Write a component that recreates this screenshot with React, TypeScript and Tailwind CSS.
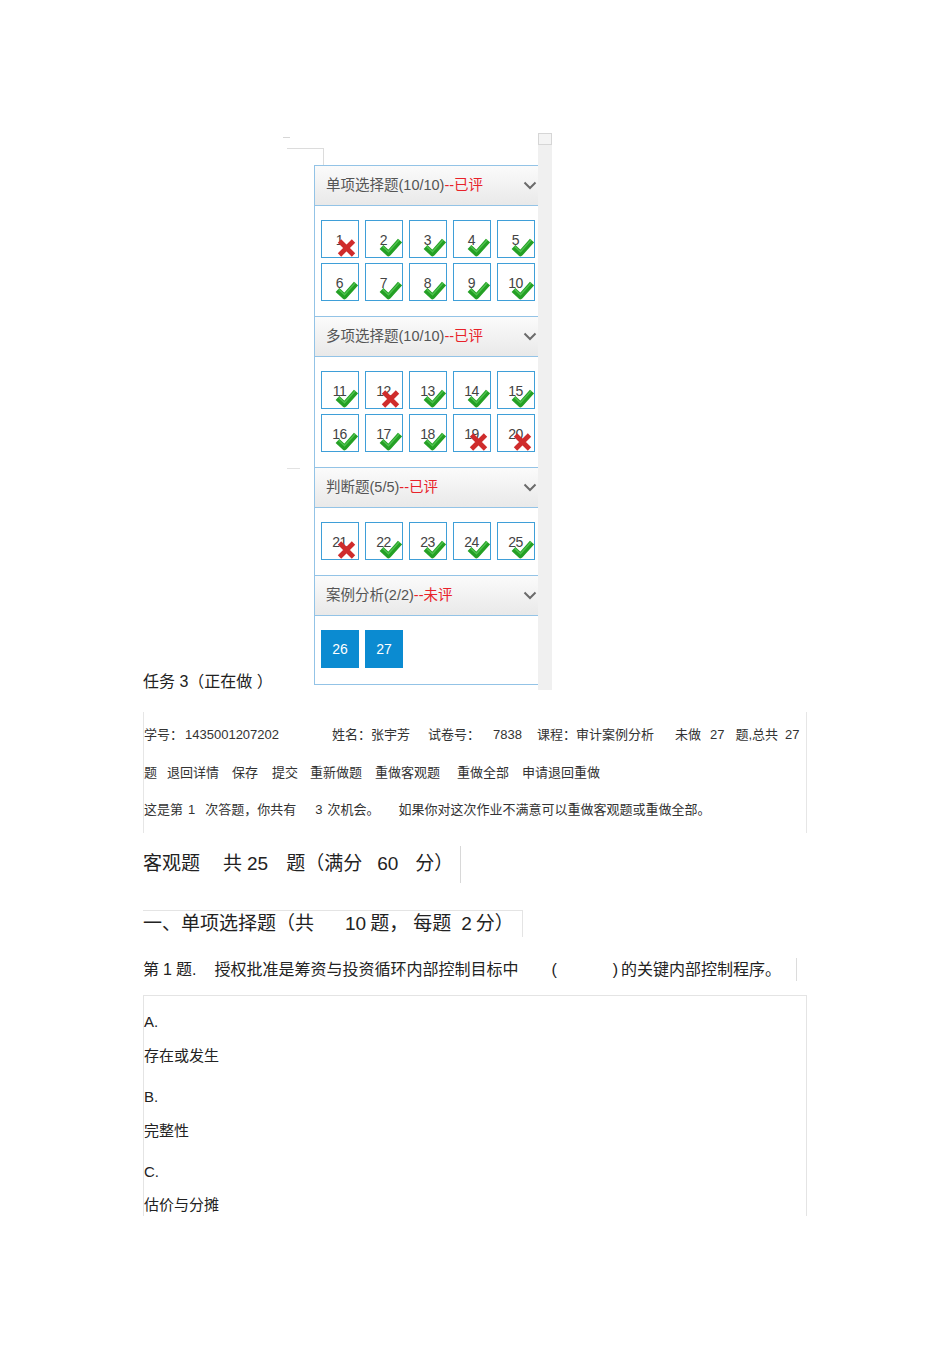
import React from "react";

type Mark = "ok" | "bad";

interface Group {
  title: string;
  count: string;
  status: string;
  items: { n: number; mark: Mark }[];
}

const groups: Group[] = [
  {
    title: "单项选择题",
    count: "(10/10)",
    status: "--已评",
    items: [1, 2, 3, 4, 5, 6, 7, 8, 9, 10].map((n) => ({
      n,
      mark: n === 1 ? "bad" : "ok",
    })),
  },
  {
    title: "多项选择题",
    count: "(10/10)",
    status: "--已评",
    items: [11, 12, 13, 14, 15, 16, 17, 18, 19, 20].map((n) => ({
      n,
      mark: [12, 19, 20].includes(n) ? "bad" : "ok",
    })),
  },
  {
    title: "判断题",
    count: "(5/5)",
    status: "--已评",
    items: [21, 22, 23, 24, 25].map((n) => ({
      n,
      mark: n === 21 ? "bad" : "ok",
    })),
  },
];

const Check = () => (
  <svg
    className="absolute right-0 bottom-0"
    width="23"
    height="21"
    viewBox="0 0 23 21"
  >
    <path
      d="M2.5 11 L9.5 17.5 L21 4.5"
      fill="none"
      stroke="#25a025"
      strokeWidth="5.5"
      strokeLinejoin="round"
    />
    <path
      d="M3.5 10.3 L9.5 15.8 L20.3 3.8"
      fill="none"
      stroke="#63d463"
      strokeWidth="1.4"
      opacity="0.65"
    />
  </svg>
);

const Cross = () => (
  <svg
    className="absolute right-[2px] bottom-0"
    width="19"
    height="18"
    viewBox="0 0 19 18"
  >
    <path
      d="M2.5 2 L16.5 16 M16.5 2 L2.5 16"
      fill="none"
      stroke="#cf2c2c"
      strokeWidth="4.8"
    />
  </svg>
);

const Chevron = () => (
  <svg width="14" height="9" viewBox="0 0 14 9" className="mr-px">
    <polyline
      points="1.5,1.5 7,7 12.5,1.5"
      fill="none"
      stroke="#6b6b6b"
      strokeWidth="2"
    />
  </svg>
);

const GroupHeader = ({
  title,
  count,
  status,
}: {
  title: string;
  count: string;
  status: string;
}) => (
  <div className="h-[41px] border-t border-b border-[#93c3e6] bg-gradient-to-b from-[#fbfbfb] to-[#e9e9e9] flex items-center justify-between pl-[11px] text-[14.5px]">
    <div>
      <span className="text-[#555]">
        {title}
        {count}
      </span>
      <span className="text-[#e8222a]">{status}</span>
    </div>
    <Chevron />
  </div>
);

const QBox = ({ n, mark }: { n: number; mark: Mark }) => (
  <div className="relative w-[38px] h-[38px] border border-[#3f9fd8] bg-white flex justify-center pt-[11px]">
    <span className="text-[14px] leading-[17px] text-[#444] tracking-[-0.5px] -ml-[1px]">
      {n}
    </span>
    {mark === "ok" ? <Check /> : <Cross />}
  </div>
);

export default function App() {
  return (
    <div className="min-h-[1345px] bg-white pl-[143px] pt-[133px] text-[#222] font-['Liberation_Sans','Noto_Sans_CJK_SC',sans-serif]">
      {/* top row: task label + nav panel */}
      <div className="flex items-end">
        <div className="w-[140px] text-[16px] leading-[20px] text-[#222] whitespace-pre mb-[-2px]">
          任务 3（正在做 ）
        </div>
        <div className="flex">
          <div className="w-[255px] flex flex-col pb-[5px]">
            <div className="h-[32px]">
              <div className="w-[7px] h-px bg-[#d6d6d6] mt-[4px]" />
              <div className="ml-[4px] mt-[10px] w-[37px] h-[17px] border-t border-r border-[#dcdcdc]" />
            </div>
            <div className="flex">
              <div className="w-[31px]">
                <div className="ml-[4px] mt-[303px] w-[13px] h-px bg-[#e2e2e2]" />
              </div>
              <div className="w-[224px] border-l border-b border-[#93c3e6] bg-white">
                {groups.map((g) => (
                  <div key={g.title}>
                    <GroupHeader
                      title={g.title}
                      count={g.count}
                      status={g.status}
                    />
                    <div className="pl-[6px] pt-[14px] pb-[15px] grid grid-cols-[repeat(5,38px)] gap-x-[6px] gap-y-[5px]">
                      {g.items.map((it) => (
                        <QBox key={it.n} n={it.n} mark={it.mark} />
                      ))}
                    </div>
                  </div>
                ))}
                <GroupHeader title="案例分析" count="(2/2)" status="--未评" />
                <div className="pl-[6px] pt-[14px] pb-[16px] flex gap-[6px]">
                  {[26, 27].map((n) => (
                    <div
                      key={n}
                      className="w-[38px] h-[38px] bg-[#0b8bd1] text-white text-[14px] flex items-center justify-center"
                    >
                      {n}
                    </div>
                  ))}
                </div>
              </div>
            </div>
          </div>
          {/* scrollbar */}
          <div className="w-[14px] bg-[#f0f0f0] flex flex-col">
            <div className="h-[12px] border border-[#d6d6d6] bg-[#f4f4f4]" />
          </div>
        </div>
      </div>

      {/* info block */}
      <div className="mt-[22px] w-[664px] h-[121px] border-l border-r border-[#e6e6e6] text-[13px] leading-[20px] text-[#333] pt-[13px] whitespace-nowrap">
        <div className="flex">
          <span>学号：</span>
          <span className="ml-[2px]">1435001207202</span>
          <span className="ml-[53px]">姓名：张宇芳</span>
          <span className="ml-[18px]">试卷号：</span>
          <span className="ml-[13px]">7838</span>
          <span className="ml-[15px]">课程：审计案例分析</span>
          <span className="ml-[21px]">未做</span>
          <span className="ml-[9px]">27</span>
          <span className="ml-[11px]">题,总共</span>
          <span className="ml-[7px]">27</span>
        </div>
        <div className="flex mt-[18px]">
          <span>题</span>
          <span className="ml-[10px]">退回详情</span>
          <span className="ml-[13px]">保存</span>
          <span className="ml-[14px]">提交</span>
          <span className="ml-[12px]">重新做题</span>
          <span className="ml-[13px]">重做客观题</span>
          <span className="ml-[17px]">重做全部</span>
          <span className="ml-[13px]">申请退回重做</span>
        </div>
        <div className="flex mt-[17px]">
          <span>这是第</span>
          <span className="ml-[5px]">1</span>
          <span className="ml-[10px]">次答题，</span>
          <span>你共有</span>
          <span className="ml-[19px]">3</span>
          <span className="ml-[5px]">次机会。</span>
          <span className="ml-[19px]">如果你对这次作业不满意可以重做客观题或重做全部。</span>
        </div>
      </div>

      {/* section heading */}
      <div className="mt-[13px] inline-flex h-[37px] items-center pr-[7px] border-r border-[#d8d8d8] text-[19px] text-[#222] whitespace-nowrap">
        <span>客观题</span>
        <span className="ml-[23px]">共</span>
        <span className="ml-[5px]">25</span>
        <span className="ml-[18px]">题（满分</span>
        <span className="ml-[15px]">60</span>
        <span className="ml-[17px]">分）</span>
      </div>

      <div>
        <div className="mt-[27px] inline-flex h-[27px] items-center pr-[8px] border-t border-r border-[#e4e4e4] text-[19px] text-[#222] whitespace-nowrap">
          <span>一、单项选择题（共</span>
          <span className="ml-[31px]">10</span>
          <span className="ml-[4px]">题，</span>
          <span className="ml-[5px]">每题</span>
          <span className="ml-[10px]">2</span>
          <span className="ml-[4px]">分）</span>
        </div>
      </div>

      <div>
        <div className="mt-[21px] inline-flex h-[23px] items-center pr-[15px] border-r border-[#dcdcdc] text-[16px] text-[#222] whitespace-nowrap">
          <span>第</span>
          <span className="ml-[4px]">1</span>
          <span className="ml-[4px]">题.</span>
          <span className="ml-[18px]">授权批准是筹资与投资循环内部控制目标中</span>
          <span className="ml-[33px]">(</span>
          <span className="ml-[56px]">)</span>
          <span className="ml-[3px]">的关键内部控制程序。</span>
        </div>
      </div>

      {/* options */}
      <div className="mt-[13px] w-[664px] h-[221px] border-t border-l border-r border-[#e4e4e4] pt-[16px] text-[15px] leading-[20px] text-[#222]">
        <div>A.</div>
        <div className="mt-[14px]">存在或发生</div>
        <div className="mt-[21px]">B.</div>
        <div className="mt-[14px]">完整性</div>
        <div className="mt-[21px]">C.</div>
        <div className="mt-[13px]">估价与分摊</div>
      </div>
    </div>
  );
}
